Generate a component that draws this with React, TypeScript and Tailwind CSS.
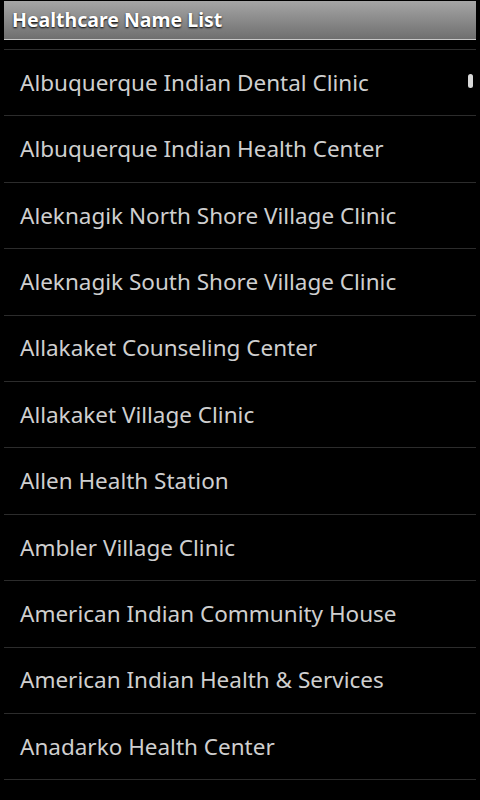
const items = [
  "Albuquerque Indian Dental Clinic",
  "Albuquerque Indian Health Center",
  "Aleknagik North Shore Village Clinic",
  "Aleknagik South Shore Village Clinic",
  "Allakaket Counseling Center",
  "Allakaket Village Clinic",
  "Allen Health Station",
  "Ambler Village Clinic",
  "American Indian Community House",
  "American Indian Health & Services",
  "Anadarko Health Center",
];

export default function App() {
  return (
    <div className="h-[800px] w-[480px] overflow-hidden bg-black font-['Noto_Sans','Open_Sans',sans-serif]">
      {/* title bar */}
      <div className="pt-px px-1">
        <div className="flex h-[39px] items-center border-b border-[#c8c8c8] bg-gradient-to-b from-[#a6a6a6] to-[#6f6f6f] px-2">
          <span className="text-[19.5px] font-bold text-white [text-shadow:0_1px_2px_#000]">
            Healthcare Name List
          </span>
        </div>
      </div>

      {/* list */}
      <div className="relative mt-[9px] mx-1">
        <div className="absolute right-[3px] top-[25px] h-[14px] w-[5px] rounded-full bg-[#d8d8d8]" />
        {items.map((name) => (
          <div
            key={name}
            className="flex h-[66.4px] items-center border-t border-[#2c2c2c] pl-4 text-[22.5px] text-[#cfcfcf]"
          >
            {name}
          </div>
        ))}
        <div className="border-t border-[#2c2c2c]" />
      </div>
    </div>
  );
}
